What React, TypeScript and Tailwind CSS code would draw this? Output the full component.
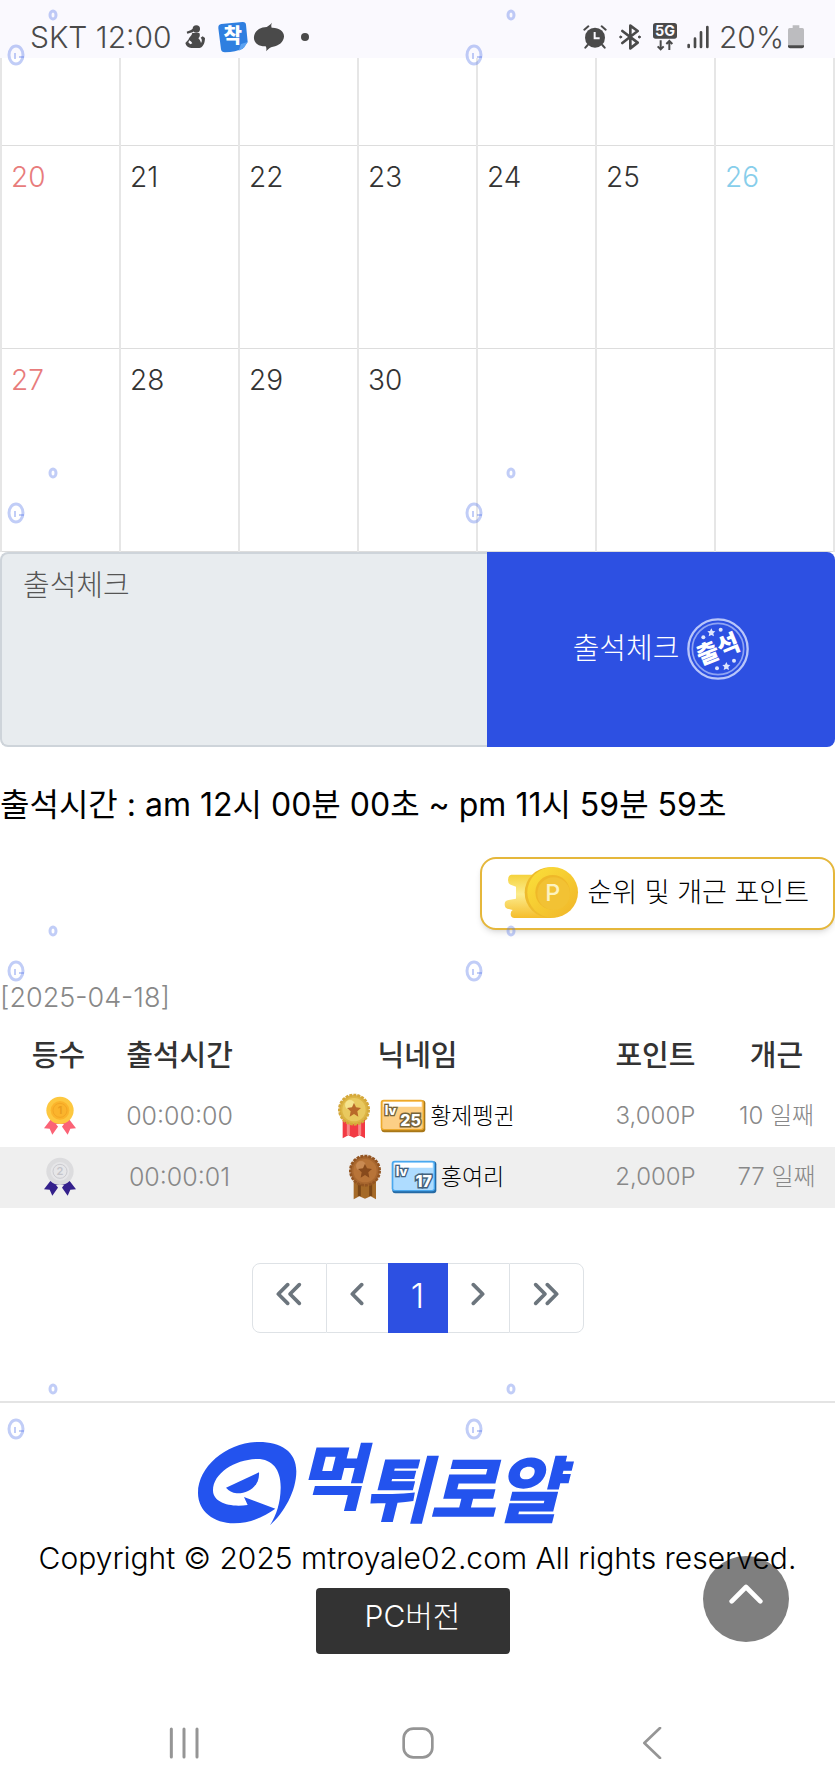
import React from "react";

const WEEKS: (number | null)[][] = [
  [null, null, null, null, null, null, null],
  [20, 21, 22, 23, 24, 25, 26],
  [27, 28, 29, 30, null, null, null],
];

const DAY_COLORS = [
  "text-[#e87c7c]",
  "text-[#333333]",
  "text-[#333333]",
  "text-[#333333]",
  "text-[#333333]",
  "text-[#333333]",
  "text-[#87ceeb]",
];

interface Rank {
  place: number;
  time: string;
  level: number;
  nickname: string;
  point: string;
  streak: string;
}

const RANKS: Rank[] = [
  { place: 1, time: "00:00:00", level: 25, nickname: "황제펭귄", point: "3,000P", streak: "10 일째" },
  { place: 2, time: "00:00:01", level: 17, nickname: "홍여리", point: "2,000P", streak: "77 일째" },
];

const StatusBar: React.FC = () => (
  <header className="flex h-[58px] items-center justify-between bg-[#faf9fe] pl-[30px] pr-[31px] pt-4 text-[#4a4a4a]">
    <div className="flex items-center">
      <span className="mr-[13px] text-[30px] leading-8 font-light">SKT 12:00</span>
      <svg className="mr-3 h-6 w-5" viewBox="0 0 60 72" fill="currentColor">
        <circle cx="34" cy="12" r="11" />
        <path d="M27 8 18 15 5 20l2 6 18-5Z" />
        <path d="M22 24C20 33 12 36 10 44L1 54c2 9 8 14 18 15h24c9 0 17-13 17-30l-7-5-6 4c5 5 4 12 1 16-1-6-5-11-8-14 6-5 5-12 3-16Z" />
        <path d="M13 46c4 2 7 5 9 9l-6 3-6-6Z" fill="#faf9fe" />
      </svg>
      <svg className="mr-1 h-8 w-8" viewBox="0 0 96 96">
        <path d="M13 9 76 3q10-1 11 8l5 52-15 20q-20 9-53 11-11 0-12-9L4 22Q3 10 13 9Z" fill="#2f7fe0" />
        <path d="M92 63 72 69l-7 20q12-4 17-10Z" fill="#5ca3f2" />
        <text x="47" y="67" fontSize="60" fontWeight="900" textAnchor="middle" fill="#fff">착</text>
      </svg>
      <svg className="mr-4 h-8 w-8" viewBox="0 0 96 96" fill="currentColor">
        <path d="M57 5q-4 8-1 15c22-1 38 11 37 27-1 15-16 28-33 30-8 1-14 7-21 14q3-9-1-15C16 77 1 64 3 47 5 31 18 21 35 19 44 18 50 12 57 5Z" />
      </svg>
      <span className="h-2 w-2 rounded-full bg-[#4a4a4a]" />
    </div>
    <div className="flex items-center">
      <svg className="mr-3 h-6 w-6" viewBox="0 0 72 72" fill="currentColor">
        <circle cx="36" cy="38" r="30" />
        <path d="M4 14 16 4M68 14 56 4M14 60 7 68M58 60l7 8" stroke="currentColor" strokeWidth="6" strokeLinecap="round" />
        <path d="M35 21v19h15" fill="none" stroke="#faf9fe" strokeWidth="6" />
      </svg>
      <svg className="mr-3 h-[26px] w-[22px]" viewBox="0 0 66 78" fill="none" stroke="currentColor" strokeWidth="8" strokeLinejoin="round" strokeLinecap="round">
        <path d="M10 21 56 56 34 73V5l22 16L10 57" />
        <circle cx="5" cy="39" r="3" fill="currentColor" strokeWidth="3" />
        <circle cx="61" cy="39" r="3" fill="currentColor" strokeWidth="3" />
      </svg>
      <svg className="mr-[10px] h-7 w-6" viewBox="0 0 72 84">
        <rect width="72" height="47" rx="8" fill="currentColor" />
        <text x="36" y="39" fontSize="43" fontWeight="700" textAnchor="middle" fill="#faf9fe">5G</text>
        <path d="M23 52v27m-9-9 9 9 9-9M49 81V54m-9 9 9-9 9 9" fill="none" stroke="currentColor" strokeWidth="6" />
      </svg>
      <svg className="mr-[10px] h-6 w-[22px]" viewBox="0 0 66 72" fill="none" stroke="currentColor" strokeWidth="8" strokeLinecap="round">
        <path d="M5 60v6M24 41v25M42 22v44M61 6v60" />
      </svg>
      <span className="mr-1 text-[30px] leading-8 font-light">20%</span>
      <svg className="h-6 w-4" viewBox="0 0 48 72">
        <path d="M14 1h20v8h9q5 0 5 5v48H0V14q0-5 5-5h9Z" fill="#bcbcbf" />
        <path d="M0 61h48v3q0 6-6 6H6q-6 0-6-6Z" fill="#4a4a4a" />
      </svg>
    </div>
  </header>
);

const Calendar: React.FC = () => (
  <table className="w-full table-fixed border-collapse">
    <tbody>
      {WEEKS.map((week, w) => (
        <tr key={w} className={w === 0 ? "h-[87px]" : "h-[203px]"}>
          {week.map((day, d) => (
            <td
              key={d}
              className={`border-x-2 border-b border-x-[#e6e6e6] border-b-[#dddddd] px-[9px] pt-[15px] align-top text-[28px] leading-8 font-light ${DAY_COLORS[d]}`}
            >
              {day}
            </td>
          ))}
        </tr>
      ))}
    </tbody>
  </table>
);

const Stamp: React.FC = () => (
  <svg className="h-[62px] w-[62px]" viewBox="0 0 186 186" fill="none">
    <circle cx="93" cy="93" r="89" stroke="#b9c6fa" strokeWidth="7" />
    <circle cx="93" cy="93" r="77" stroke="#8fa4f3" strokeWidth="5" />
    <g fill="#dfe6fd">
      <path d="m73 31 4 8 8 1-6 6 2 9-8-4-8 4 2-9-6-6 8-1Z" />
      <path d="m118 132 4 8 8 1-6 6 2 9-8-4-8 4 2-9-6-6 8-1Z" />
      <circle cx="49" cy="58" r="6" />
      <circle cx="101" cy="35" r="6" />
      <circle cx="90" cy="151" r="6" />
      <circle cx="141" cy="128" r="6" />
    </g>
    <text x="93" y="119" fontSize="72" fontWeight="900" textAnchor="middle" fill="#fff" transform="rotate(-22 93 93)">
      출석
    </text>
  </svg>
);

const CoinIcon: React.FC = () => (
  <svg className="h-[54px] w-[75px]" viewBox="0 0 225 162">
    <defs>
      <linearGradient id="coin" x1="0" y1="0" x2="1" y2="1">
        <stop offset="0" stopColor="#fbe13a" />
        <stop offset="1" stopColor="#f0b429" />
      </linearGradient>
      <linearGradient id="trail" x1="0" y1="0" x2="0" y2="1">
        <stop offset="0" stopColor="#f5d23c" />
        <stop offset="0.45" stopColor="#fcec8e" />
        <stop offset="1" stopColor="#f5bd2a" />
      </linearGradient>
    </defs>
    <path d="M22 26h120v130H32q-12 0-12-12 0-9 6-12L10 128q-8-2-8-14 0-10 12-12l22-4V62l-16-6q-8-3-8-14 0-14 10-16Z" fill="url(#trail)" />
    <circle cx="138" cy="80" r="76" fill="#eebb2c" />
    <circle cx="146" cy="79" r="76" fill="url(#coin)" />
    <circle cx="146" cy="79" r="52" fill="#efb829" />
    <circle cx="149" cy="83" r="49" fill="#f2c234" />
    <text x="146" y="104" fontSize="70" fontWeight="500" textAnchor="middle" fill="#fdf3c0">P</text>
  </svg>
);

const PlaceMedal: React.FC<{ place: number }> = ({ place }) => {
  const gold = place === 1;
  return (
    <svg className="mx-auto h-10 w-8" viewBox="0 0 96 120" role="img" aria-label={`${place}`}>
      <path d="M19 72 0 97l17 1 8 18 23-33 23 33 8-18 17-1-19-25Z" fill={gold ? "#fb6376" : "#34208c"} />
      <path d="M36 84h24L48 100Z" fill={gold ? "#fff" : "#efefef"} />
      <circle cx="48" cy="43" r="41" fill={gold ? "#fdc840" : "#dcdcde"} />
      <circle cx="48" cy="43" r="28" fill={gold ? "#fbb42c" : "#e6e6e8"} />
      <circle cx="48" cy="43" r="21" fill="none" stroke={gold ? "#f3a624" : "#cbcbd0"} strokeWidth="3" />
      <text x="48" y="55" fontSize="33" fontWeight="600" textAnchor="middle" fill={gold ? "#ea9d1e" : "#c4c4ca"}>
        {place}
      </text>
    </svg>
  );
};

const StarMedal: React.FC<{ gold: boolean }> = ({ gold }) => (
  <svg className="h-[46px] w-9" viewBox="0 0 108 138">
    <path d="M20 70h67v66l-16-9-17 7-17-7-17 9Z" fill={gold ? "#f23a44" : "#a56a28"} />
    <path d="M37 80v46M71 80v46" stroke={gold ? "#f98686" : "#7a4717"} strokeWidth="9" />
    <circle cx="54" cy="50" r="44" fill={gold ? "#dcb545" : "#a8672f"} stroke={gold ? "#d5a83a" : "#935522"} strokeWidth="8" strokeDasharray="9 3" />
    <circle cx="54" cy="50" r="35" fill={gold ? "#e9c95f" : "#b87438"} />
    <circle cx="42" cy="36" r="15" fill={gold ? "#f5e48e" : "#c98a52"} />
    <path d="m54 29 6 14 15 2-11 10 3 16-13-8-13 8 3-16-11-10 15-2Z" fill={gold ? "#b9692a" : "#874a1c"} />
  </svg>
);

const LevelBadge: React.FC<{ level: number }> = ({ level }) => {
  const gold = level > 20;
  const ink = gold ? "#75633a" : "#43617c";
  return (
    <svg className="h-[34px] w-[46px]" viewBox="0 0 138 102" role="img" aria-label={`lv ${level}`}>
      <rect x="4" y="4" width="132" height="96" rx="9" fill={gold ? "#a87718" : "#256aa5"} />
      <rect x="2" y="2" width="130" height="92" rx="9" fill={gold ? "#eca92c" : "#4aa8ee"} />
      <rect x="7" y="7" width="121" height="83" rx="5" fill={gold ? "#fccf85" : "#aedcff"} />
      <path d="M10 9h115v14H10Z" fill="#fff" />
      <text x="14" y="47" fontSize="38" fontWeight="800" fill="#fff" stroke={ink} strokeWidth="8" paintOrder="stroke">lv</text>
      <text x="123" y="82" fontSize="48" fontWeight="800" textAnchor="end" fill="#fff" stroke={ink} strokeWidth="9" paintOrder="stroke">
        {level}
      </text>
    </svg>
  );
};

const RankTable: React.FC = () => (
  <table className="w-full table-fixed border-collapse text-center">
    <colgroup>
      <col className="w-[14%]" />
      <col className="w-[15%]" />
      <col className="w-[42%]" />
      <col className="w-[15%]" />
      <col className="w-[14%]" />
    </colgroup>
    <thead>
      <tr className="h-[68px] text-[29px] leading-8 text-[#333333]">
        {["등수", "출석시간", "닉네임", "포인트", "개근"].map((title) => (
          <th key={title} className="px-0 pt-2 pb-0 font-medium">{title}</th>
        ))}
      </tr>
    </thead>
    <tbody>
      {RANKS.map((rank) => (
        <tr key={rank.place} className="h-[61px] text-[24px] leading-8 font-light text-[#888888] even:bg-[#efefef]">
          <td className="py-0 pr-0 pl-1"><PlaceMedal place={rank.place} /></td>
          <td className="p-0 text-[25px]">{rank.time}</td>
          <td className="p-0">
            <div className="flex items-center justify-center pl-4 text-[23px] text-black">
              <StarMedal gold={rank.place === 1} />
              <span className="ml-2 mr-1 flex"><LevelBadge level={rank.level} /></span>
              {rank.nickname}
            </div>
          </td>
          <td className="p-0">{rank.point}</td>
          <td className="p-0">{rank.streak}</td>
        </tr>
      ))}
    </tbody>
  </table>
);

const Chevrons: React.FC<{ double?: boolean; flip?: boolean }> = ({ double, flip }) => (
  <svg
    className={`h-6 ${double ? "w-[26px]" : "w-[14px]"} ${flip ? "rotate-180" : ""}`}
    viewBox={double ? "0 0 78 72" : "0 0 42 72"}
    fill="none"
    stroke="#6c757d"
    strokeWidth="11"
    strokeLinecap="round"
    strokeLinejoin="round"
  >
    <path d="M35 8 7 36l28 28" />
    {double && <path d="M70 8 42 36l28 28" />}
  </svg>
);

const Pagination: React.FC = () => (
  <nav className="mx-auto flex h-[70px] w-fit" aria-label="페이지">
    <a href="#first" aria-label="처음" className="flex w-[75px] items-center justify-center rounded-l-lg border border-[#dee2e6] pb-2">
      <Chevrons double />
    </a>
    <a href="#prev" aria-label="이전" className="flex w-[61px] items-center justify-center border-y border-[#dee2e6] pb-2">
      <Chevrons />
    </a>
    <a href="#1" aria-current="page" className="flex w-[60px] items-center justify-center bg-[#2d50e2] pb-1 text-[34px] font-light text-white">
      1
    </a>
    <a href="#next" aria-label="다음" className="flex w-[61px] items-center justify-center border-y border-[#dee2e6] pb-2">
      <Chevrons flip />
    </a>
    <a href="#last" aria-label="마지막" className="flex w-[75px] items-center justify-center rounded-r-lg border border-[#dee2e6] pb-2">
      <Chevrons double flip />
    </a>
  </nav>
);

const Logo: React.FC = () => (
  <svg className="h-[90px] w-[384px] overflow-visible" viewBox="40 140 1152 270" fill="#2353ee" role="img" aria-label="먹튀로얄">
    <path d="M268 402C310 365 347 300 347 240C347 180 300 152 235 152C140 152 52 225 52 305C52 360 100 396 160 396C215 396 255 372 284 352L190 317L201 341C150 349 97 335 97 297C97 245 165 204 230 203C275 203 301 235 300 290C299 335 288 370 268 402Z" />
    <path d="M136 289 235 243C238 285 200 308 168 306Q148 303 136 289Z" />
    <text
      x="350 548 746 944"
      y="339 376 376 376"
      fontSize="218"
      fontWeight="900"
      fontStyle="italic"
      className="font-['Noto_Sans_CJK_KR',sans-serif]"
    >
      먹튀로얄
    </text>
  </svg>
);

const Watermark: React.FC = () => (
  <svg className="pointer-events-none absolute inset-0 h-full w-full" aria-hidden="true">
    <defs>
      <pattern id="mark" width="458" height="458" patternUnits="userSpaceOnUse">
        <g fill="none" stroke="#5b7bea" strokeOpacity="0.38">
          <ellipse cx="16" cy="55" rx="7" ry="9" strokeWidth="3" />
          <path d="M15 59v-6M19 57h5" strokeWidth="2" />
          <ellipse cx="53" cy="15" rx="3" ry="4" strokeWidth="3" />
        </g>
      </pattern>
    </defs>
    <rect width="100%" height="100%" fill="url(#mark)" />
  </svg>
);

const App: React.FC = () => {
  return (
    <div className="relative min-h-screen bg-white font-['Inter','Noto_Sans_CJK_KR',sans-serif] text-black">
      <StatusBar />
      <main>
        <Calendar />
        <form className="flex h-[195px]">
          <textarea
            disabled
            aria-label="출석체크"
            placeholder="출석체크"
            className="w-7/12 resize-none rounded-l-lg border-2 border-r-0 border-[#ced4da] bg-[#e8ecef] px-[21px] py-3 text-[29px] leading-10 font-light placeholder:text-[#555555]"
          />
          <button type="button" className="flex flex-1 items-center justify-center gap-2 rounded-r-lg bg-[#2d50e2] text-[29px] font-light text-white">
            출석체크
            <Stamp />
          </button>
        </form>
        <p className="mt-9 text-[32px] leading-11 font-normal whitespace-nowrap">출석시간 : am 12시 00분 00초 ~ pm 11시 59분 59초</p>
        <div className="mt-[30px] flex justify-end">
          <button type="button" className="flex h-[73px] items-center gap-2 rounded-2xl border-2 border-[#e5b73b] bg-white pl-[22px] pr-6 text-[27px] font-light shadow-md">
            <CoinIcon />
            순위 및 개근 포인트
          </button>
        </div>
        <p className="mt-12 text-[27px] leading-10 font-light text-[#888888]">[2025-04-18]</p>
        <RankTable />
        <div className="mt-[55px]">
          <Pagination />
        </div>
      </main>
      <footer className="mt-[68px] border-t-2 border-[#e4e4e4] pt-[35px]">
        <div className="flex justify-center pr-16">
          <Logo />
        </div>
        <p className="mt-[10px] text-center text-[30px] leading-10 font-light whitespace-nowrap">
          Copyright © 2025 mtroyale02.com All rights reserved.
        </p>
        <div className="mt-[10px] flex justify-center pr-[10px]">
          <button type="button" className="h-[66px] w-[194px] rounded bg-[#333333] pb-2 text-[30px] font-light text-white">
            PC버전
          </button>
        </div>
        <nav className="mt-[73px] flex h-8 items-center justify-between px-[168px]" aria-label="시스템">
          <button type="button" aria-label="최근 앱" className="flex">
            <svg className="h-8 w-8" viewBox="0 0 96 96" fill="none" stroke="#959595" strokeWidth="9" strokeLinecap="round">
              <path d="M10 6v84M48 6v84M87 6v84" />
            </svg>
          </button>
          <button type="button" aria-label="홈" className="flex">
            <svg className="h-8 w-8" viewBox="0 0 96 96" fill="none" stroke="#959595" strokeWidth="8">
              <rect x="5" y="5" width="86" height="86" rx="29" />
            </svg>
          </button>
          <button type="button" aria-label="뒤로" className="flex">
            <svg className="h-8 w-8" viewBox="0 0 96 96" fill="none" stroke="#959595" strokeWidth="8" strokeLinecap="round" strokeLinejoin="round">
              <path d="M75 3 28 48l47 45" />
            </svg>
          </button>
        </nav>
        <div className="h-8" />
      </footer>
      <a href="#top" aria-label="맨 위로" className="fixed right-[46px] bottom-[149px] flex h-[86px] w-[86px] justify-center rounded-full bg-black/50 pt-7">
        <svg className="h-5 w-[34px]" viewBox="0 0 102 60" fill="none" stroke="#fff" strokeWidth="14" strokeLinecap="round" strokeLinejoin="round">
          <path d="M8 52 51 9l43 43" />
        </svg>
      </a>
      <Watermark />
    </div>
  );
};

export default App;
